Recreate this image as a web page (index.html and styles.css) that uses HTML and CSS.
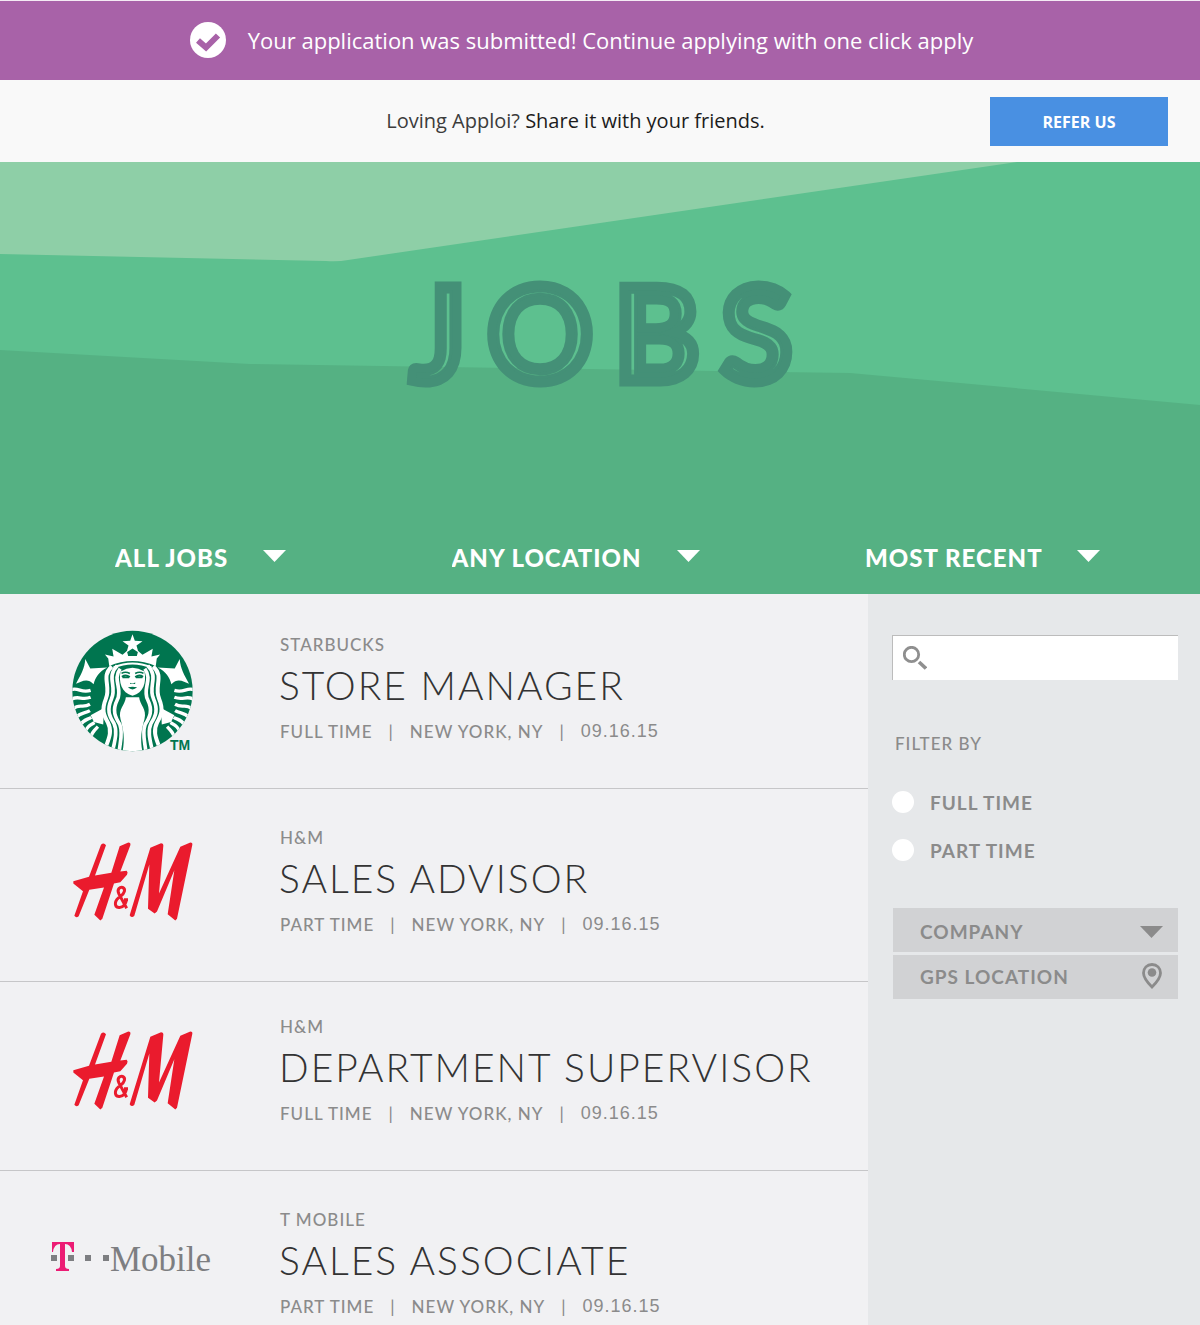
FILE: index.html
```html
<!DOCTYPE html>
<html lang="en">
<head>
<meta charset="utf-8">
<meta name="viewport" content="width=device-width, initial-scale=1">
<title>Jobs</title>
<link rel="stylesheet" href="styles.css">
</head>
<body>
<svg class="sprites" aria-hidden="true">
  <symbol id="hm" viewBox="38 38 360 236">
    <path d="M122 46Q130 38 137 47L104 138L153 130L178 50L204 39Q212 39 210 47L180 126L199 124Q204 128 200 136L180 158L161 162L126 268L120 273L102 256L131 174L87 181L55 260Q48 267 42 259L68 185L39 162L39 155L86 142Z"/>
    <path d="M208 257L270 55L302 41Q310 42 309 49L296 192L360 52L390 39Q397 39 396 46L350 268L345 273L322 254L342 122L290 246L283 252L263 238L267 105L222 259Q214 267 208 257Z"/>
    <path class="hm-amp" d="M199 236L176 194C168 178 180 172 187 174C197 178 193 192 180 201C162 212 160 232 176 234C190 235 197 222 198 211M191 211H203"/>
  </symbol>
  <symbol id="caret" viewBox="0 0 23 12"><path d="M0 0H23L11.500 12Z"/></symbol>
</svg>

<div class="notice" role="status">
  <svg class="notice-icon" viewBox="0 0 36 36" aria-hidden="true">
    <circle cx="18" cy="18" r="18" fill="#fff"/>
    <path d="M8 18.500L16 25.500L28 13.500" fill="none" stroke="#a862a8" stroke-width="6"/>
  </svg>
  <p class="notice-text">Your application was submitted! Continue applying with one click apply</p>
</div>

<div class="refer">
  <p class="refer-text">Loving Apploi? <span class="refer-strong">Share it with your friends.</span></p>
  <button class="refer-button" type="button">REFER US</button>
</div>

<header class="hero">
  <svg class="hero-waves" viewBox="0 0 1200 432" preserveAspectRatio="none" aria-hidden="true">
    <path fill="#8ecfa7" d="M0 0H1017L348 98Q338 100 326 99L0 92Z"/>
    <path fill="#55b183" d="M0 188L250 202L850 211L1200 243V432H0Z"/>
  </svg>
  <h1 class="hero-title">
    <svg class="hero-word" viewBox="0 0 480 180">
      <defs>
        <mask id="inline" maskUnits="userSpaceOnUse" x="0" y="0" width="480" height="180">
          <rect width="480" height="180" fill="#fff"/>
          <use href="#word" class="word-line"/>
        </mask>
      </defs>
      <g mask="url(#inline)" class="word-body"><text id="word" x="50" y="140">JOBS</text></g>
    </svg>
  </h1>
  <form class="sorts">
    <div class="sort">
      <select class="sort-select" aria-label="Job type"><option>ALL JOBS</option></select>
      <svg class="sort-caret" aria-hidden="true"><use href="#caret"/></svg>
    </div>
    <div class="sort">
      <select class="sort-select" aria-label="Location"><option>ANY LOCATION</option></select>
      <svg class="sort-caret" aria-hidden="true"><use href="#caret"/></svg>
    </div>
    <div class="sort">
      <select class="sort-select" aria-label="Order"><option>MOST RECENT</option></select>
      <svg class="sort-caret" aria-hidden="true"><use href="#caret"/></svg>
    </div>
  </form>
</header>

<div class="content">
  <main class="jobs">
    <article class="job job-first">
      <div class="job-logo">
        <svg class="logo-starbucks" viewBox="38 34 364 366" role="img" aria-label="Starbucks">
          <defs>
            <clipPath id="disc"><circle cx="220" cy="217" r="181"/></clipPath>
            <g id="half">
              <path fill="#fff" d="M78 121L93 149L144 146C120 158 108 175 103 197C84 176 66 190 50 195C64 170 76 150 78 121Z"/>
              <path fill="#fff" d="M94 290L134 268L132 318L104 310Z"/>
              <g fill="none" stroke="#fff" stroke-width="10">
                <path d="M36 213C58 206 66 224 94 215M38 241C58 230 68 246 94 236M42 270C60 254 70 270 92 257M50 297C64 280 76 286 92 276M62 321C72 302 84 304 96 296M76 344C82 324 92 320 106 312M92 362C96 344 104 336 116 324"/>
                <path stroke-width="12" d="M158 143C124 172 156 204 140 240C126 274 134 290 146 312C160 338 148 362 140 384"/>
                <path stroke-width="11" d="M174 141C140 174 174 204 157 240C142 274 150 292 164 314C176 338 166 370 160 398"/>
                <path stroke-width="11" d="M183 150C158 184 192 210 174 244C158 276 168 296 182 318C192 344 182 372 180 400"/>
              </g>
              <path fill="none" stroke="#00754f" stroke-width="5" d="M187 164Q198 157 212 164M188 174Q200 166 212 175M190 176H210"/>
            </g>
          </defs>
          <circle cx="220" cy="217" r="181" fill="#00754f"/>
          <g clip-path="url(#disc)">
            <path fill="#fff" d="M200 236H240C242 260 264 270 256 302C248 330 242 360 250 400H190C198 360 192 330 184 302C176 270 198 260 200 236Z"/>
            <path fill="#fff" d="M184 158Q220 136 256 158C262 190 254 222 220 231C186 222 178 190 184 158Z"/>
            <path fill="#fff" d="M150 142L147 119L137 107L163 113L159 90L190 108L203 97L207 112H233L237 97L250 108L281 90L277 113L303 107L293 119L290 142Q220 112 150 142Z"/>
            <path fill="none" stroke="#fff" stroke-width="6" d="M163 146Q220 122 277 146"/>
            <path fill="#fff" d="M220 46L227 66L250 67L232 80L238 101L220 89L202 101L208 80L190 67L213 66Z"/>
            <use href="#half"/>
            <use href="#half" transform="translate(440 0) scale(-1 1)"/>
            <path fill="#00754f" d="M206 206Q220 203 234 206Q220 219 206 206ZM213 192Q222 198 228 191V196H213Z"/>
          </g>
          <text class="logo-tm" x="333" y="396">TM</text>
        </svg>
      </div>
      <div class="job-text">
        <p class="job-company">STARBUCKS</p>
        <h2 class="job-title">STORE MANAGER</h2>
        <p class="job-meta"><span>FULL TIME</span><span class="bar">|</span><span>NEW YORK, NY</span><span class="bar">|</span><time class="job-date" datetime="2015-09-16">09.16.15</time></p>
      </div>
    </article>
    <article class="job">
      <div class="job-logo"><svg class="logo-hm" role="img" aria-label="H&amp;M"><use href="#hm"/></svg></div>
      <div class="job-text">
        <p class="job-company">H&amp;M</p>
        <h2 class="job-title">SALES ADVISOR</h2>
        <p class="job-meta"><span>PART TIME</span><span class="bar">|</span><span>NEW YORK, NY</span><span class="bar">|</span><time class="job-date" datetime="2015-09-16">09.16.15</time></p>
      </div>
    </article>
    <article class="job job-compact">
      <div class="job-logo"><svg class="logo-hm" role="img" aria-label="H&amp;M"><use href="#hm"/></svg></div>
      <div class="job-text">
        <p class="job-company">H&amp;M</p>
        <h2 class="job-title">DEPARTMENT SUPERVISOR</h2>
        <p class="job-meta"><span>FULL TIME</span><span class="bar">|</span><span>NEW YORK, NY</span><span class="bar">|</span><time class="job-date" datetime="2015-09-16">09.16.15</time></p>
      </div>
    </article>
    <article class="job">
      <div class="job-logo">
        <svg class="logo-tmobile" viewBox="0 0 164 32" role="img" aria-label="T-Mobile">
          <path fill="#ec1c74" d="M1 1H23V11H21Q20 3 14 3V25Q14 28 18 28V30H5V28Q9 28 9 25V3Q3 3 2 11H1Z"/>
          <path fill="#7d7e81" d="M0 14H6V20H0ZM17 14H23V20H17ZM34 14H40V20H34ZM52 14H58V20H52Z"/>
          <text class="logo-mobile" x="59" y="30">Mobile</text>
        </svg>
      </div>
      <div class="job-text">
        <p class="job-company">T MOBILE</p>
        <h2 class="job-title">SALES ASSOCIATE</h2>
        <p class="job-meta"><span>PART TIME</span><span class="bar">|</span><span>NEW YORK, NY</span><span class="bar">|</span><time class="job-date" datetime="2015-09-16">09.16.15</time></p>
      </div>
    </article>
  </main>

  <aside class="sidebar">
    <div class="search">
      <svg class="search-icon" viewBox="0 0 24 24" fill="none" stroke="#8f8f8f" aria-hidden="true">
        <circle cx="8.500" cy="8.500" r="7.200" stroke-width="2.800"/>
        <path d="M16 16L23 22.500" stroke-width="3.600"/>
      </svg>
      <input class="search-input" type="search" aria-label="Search jobs">
    </div>
    <fieldset class="filters">
      <legend class="filters-title">FILTER BY</legend>
      <label class="filter"><input class="filter-radio" type="radio" name="hours">FULL TIME</label>
      <label class="filter"><input class="filter-radio" type="radio" name="hours">PART TIME</label>
    </fieldset>
    <div class="options">
      <div class="option-wrap">
        <select class="option" aria-label="Company"><option>COMPANY</option></select>
        <svg class="option-caret" aria-hidden="true"><use href="#caret"/></svg>
      </div>
      <button class="option option-gps" type="button">GPS LOCATION
        <svg class="pin" viewBox="0 0 20 26" aria-hidden="true">
          <path d="M10 1.500C5 1.500 1.500 5 1.500 10C1.500 15.500 6 20 10 24C14 20 18.500 15.500 18.500 10C18.500 5 15 1.500 10 1.500Z" fill="none" stroke="#8b8b8b" stroke-width="2.800"/>
          <circle cx="10" cy="9.500" r="4.300" fill="#8b8b8b"/>
        </svg>
      </button>
    </div>
  </aside>
</div>
</body>
</html>
```

FILE: styles.css
```css
* { box-sizing: border-box; }

body {
  margin: 0;
  min-height: 100vh;
  display: flex;
  flex-direction: column;
  background: #f1f1f3;
  font-family: Lato, "Open Sans", sans-serif;
  color: #8b8b8b;
}

h1, h2, p { margin: 0; font-weight: 400; }
svg { display: block; flex: none; }
button, input, select { font: inherit; color: inherit; }
.sprites { position: absolute; width: 0; height: 0; }

/* Notice */
.notice {
  display: flex;
  align-items: center;
  justify-content: center;
  gap: 22px;
  min-height: 80px;
  padding: 0 37px 2px 0;
  border-top: 1px solid #f4eaf4;
  background: #a862a8;
  color: #fff;
}
.notice-icon { width: 36px; height: 36px; }
.notice-text { font: 22px/30px "Open Sans", sans-serif; }

/* Refer bar */
.refer {
  display: flex;
  align-items: center;
  min-height: 82px;
  padding: 0 32px 0 161px;
  background: #f9f9f9;
}
.refer-text {
  flex: 1;
  text-align: center;
  font: 20px/28px "Open Sans", sans-serif;
  color: #3c3c3c;
}
.refer-strong { color: #1c1c1c; }
.refer-button {
  width: 178px;
  height: 49px;
  border: 0;
  padding: 2px 0 0;
  background: #4990e2;
  color: #fff;
  font: 700 16px/20px "Open Sans", sans-serif;
}

/* Hero */
.hero {
  position: relative;
  display: flex;
  flex-direction: column;
  justify-content: space-between;
  min-height: 432px;
  padding: 80px 0 18px;
  background: #5dc08f;
}
.hero-waves { position: absolute; inset: 0; width: 100%; height: 100%; }
.hero-title { position: relative; display: flex; justify-content: center; }
.hero-word { width: 480px; height: 180px; }
.hero-word text { font: 700 132px Lato, sans-serif; letter-spacing: 20px; }
.word-body { fill: #449077; stroke: #449077; stroke-width: 9px; }
.word-line { fill: #000; stroke: #fff; stroke-width: 15px; }

.sorts {
  position: relative;
  display: flex;
  justify-content: space-between;
  padding: 0 100px 0 115px;
}
.sort { position: relative; display: flex; align-items: center; }
.sort-select {
  appearance: none;
  border: 0;
  padding: 0 56px 0 0;
  background: none;
  color: #fff;
  font-family: "Lato Black", Lato, sans-serif;
  font-weight: 900;
  font-size: 24px;
  line-height: 36px;
  letter-spacing: 1px;
}
.sort-caret {
  position: absolute;
  right: 0;
  width: 23px;
  height: 12px;
  margin-bottom: 4px;
  fill: #fff;
  pointer-events: none;
}

/* Job list */
.content { flex: 1; display: flex; }
.jobs { flex: 1; }
.job {
  display: flex;
  align-items: center;
  padding: 37px 0 38px;
  border-bottom: 1px solid #c6c6c8;
}
.job-first { padding: 36px 0; }
.job-compact { padding-top: 33px; }
.job:last-child { padding-bottom: 0; border-bottom: 0; }
.job-logo {
  display: flex;
  justify-content: center;
  flex: none;
  width: 265px;
  margin-right: 14px;
}
.job-company { padding-left: 1px; font-weight: 500; font-size: 17px; line-height: 24px; letter-spacing: 1px; }
.job-title {
  font-weight: 300;
  font-size: 39px;
  line-height: 56px;
  letter-spacing: 2px;
  color: #333;
}
.job-meta {
  display: flex;
  gap: 16px;
  padding-left: 1px;
  font-weight: 500;
  font-size: 17px;
  line-height: 37px;
  letter-spacing: 1px;
}
.job-date { font: 18px/37px "Liberation Sans", sans-serif; }

.logo-starbucks { width: 121px; height: 122px; overflow: visible; }
.logo-tm { font: 700 42px "Liberation Sans", sans-serif; fill: #00754f; }
.logo-hm { width: 120px; height: 79px; margin-bottom: 6px; fill: #ea1b2d; }
.hm-amp { fill: none; stroke: #ea1b2d; stroke-width: 9px; }
.logo-tmobile { width: 164px; height: 32px; margin-bottom: 20px; overflow: visible; }
.logo-mobile { font: 35px "Liberation Serif", serif; fill: #7d7e81; }

/* Sidebar */
.sidebar {
  flex: none;
  width: 332px;
  padding: 41px 22px 40px 24px;
  background: #e6e8ea;
}
.search {
  display: flex;
  align-items: center;
  height: 45px;
  padding: 0 10px;
  gap: 10px;
  border-top: 1px solid #bcbcbc;
  border-left: 1px solid #bcbcbc;
  background: #fff;
}
.search-icon { width: 24px; height: 24px; }
.search-input {
  flex: 1;
  min-width: 0;
  border: 0;
  padding: 0;
  background: none;
  font-size: 18px;
  outline: 0;
}
.filters { margin: 0; padding: 0; border: 0; }
.filters-title {
  padding: 52px 3px 34px;
  font-weight: 500;
  font-size: 17px;
  line-height: 24px;
  letter-spacing: 1px;
}
.filter {
  display: flex;
  align-items: center;
  gap: 16px;
  height: 24px;
  margin-bottom: 24px;
  font-weight: 700;
  font-size: 19px;
  letter-spacing: 1px;
}
.filter-radio {
  appearance: none;
  width: 22px;
  height: 22px;
  margin: 0;
  border-radius: 50%;
  background: #fff;
}
.filter-radio:checked { border: 6px solid #fff; background: #8b8b8b; }

.options { display: grid; gap: 3px; margin: 22px 0 0 1px; }
.option-wrap { position: relative; display: flex; align-items: center; }
.option {
  appearance: none;
  width: 100%;
  height: 44px;
  border: 0;
  border-radius: 0;
  padding: 2px 16px 0 27px;
  background: #d1d2d4;
  font-weight: 700;
  font-size: 19px;
  letter-spacing: 1px;
  text-align: left;
}
.option-gps { display: flex; align-items: center; justify-content: space-between; padding: 0 16px 2px 27px; }
.option-caret {
  position: absolute;
  right: 15px;
  width: 23px;
  height: 12px;
  margin-top: 4px;
  fill: #8b8b8b;
  pointer-events: none;
}
.pin { width: 20px; height: 26px; }
```
